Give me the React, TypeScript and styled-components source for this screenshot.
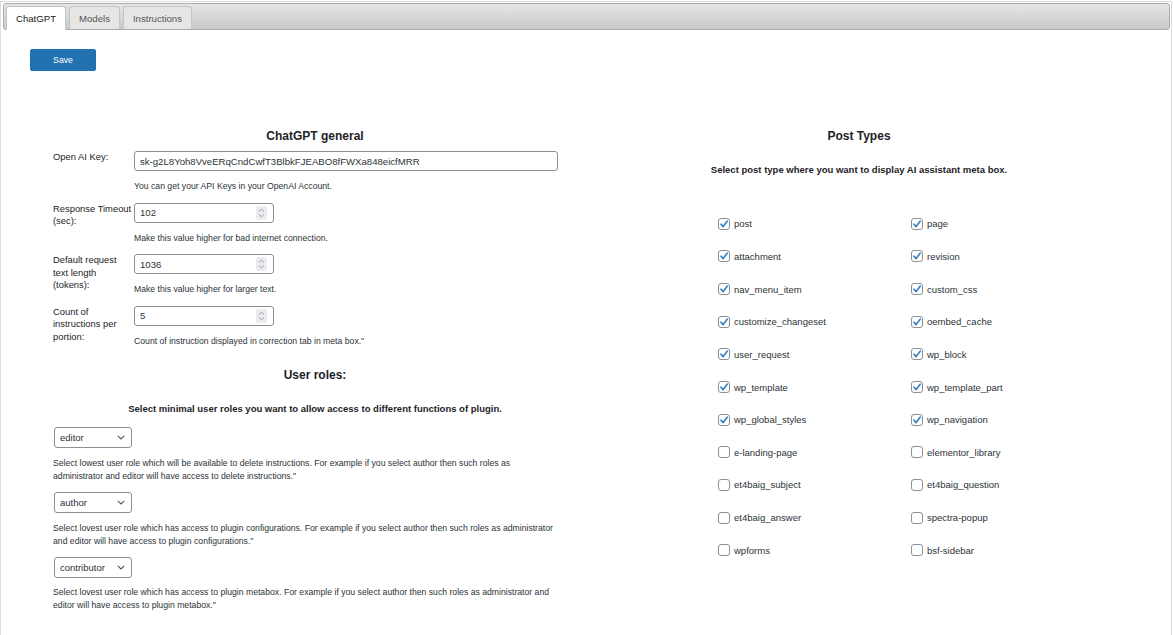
import React from 'react';
import styled, { createGlobalStyle } from 'styled-components';

const Global = createGlobalStyle`
  html, body { margin: 0; padding: 0; background: #fff; }
  body { font-family: "Liberation Sans", Arial, sans-serif; color: #1d2327; }
  * { box-sizing: border-box; }
`;

const Widget = styled.div`
  margin: 1px 1px 0 0;
  border: 1px solid #dcdcdc;
  border-bottom: 0;
  padding: 1px 1px 0 2px;
  min-height: 640px;
  background: #fff;
`;

const TabBar = styled.ul`
  display: flex;
  align-items: flex-end;
  gap: 3px;
  margin: 0;
  padding: 0 2px;
  list-style: none;
  height: 27px;
  border: 1px solid #acacac;
  border-radius: 3px;
  background: linear-gradient(#e6e6e6, #c8c8c8);
`;

const Tab = styled.li<{ $active?: boolean }>`
  height: ${(p) => (p.$active ? '24px' : '23px')};
  margin-bottom: ${(p) => (p.$active ? '-1px' : '0')};
  padding: 0 9px;
  display: flex;
  align-items: center;
  justify-content: center;
  border: 1px solid #c5c5c5;
  border-bottom: 0;
  border-radius: 3px 3px 0 0;
  background: ${(p) => (p.$active ? '#fff' : '#e6e6e6')};
  color: ${(p) => (p.$active ? '#222' : '#555')};
  font-size: 9.6px;
  padding-bottom: ${(p) => (p.$active ? '1px' : '0')};
`;

const Panel = styled.div`
  padding: 19px 27px;
`;

const SaveButton = styled.button`
  width: 66px;
  height: 22px;
  border: 1px solid #2271b1;
  border-radius: 2px;
  background: #2271b1;
  color: #fff;
  font-family: "Liberation Sans", Arial, sans-serif;
  font-size: 8.7px;
  padding: 0;
  display: block;
`;

const Columns = styled.div`
  display: flex;
  gap: 123px;
  margin: 58px 0 0 23px;
`;

const LeftCol = styled.div`
  width: 524px;
  display: flex;
  flex-direction: column;
`;

const RightCol = styled.div`
  width: 318px;
  display: flex;
  flex-direction: column;
`;

const Heading = styled.h2<{ $mt?: number }>`
  margin: ${(p) => p.$mt ?? 0}px 0 0;
  font-size: 12px;
  line-height: 14px;
  font-weight: bold;
  text-align: center;
  color: #1d2327;
`;

const Intro = styled.p<{ $mt?: number }>`
  margin: ${(p) => p.$mt ?? 0}px 0 0;
  font-size: 9.5px;
  line-height: 13px;
  font-weight: bold;
  text-align: center;
  color: #1d2327;
`;

const Form = styled.div`
  display: flex;
  flex-direction: column;
  gap: 9px;
  margin-top: 8px;
  width: 505px;
`;

const Row = styled.div`
  display: grid;
  grid-template-columns: 81px 1fr;
  align-items: start;
`;

const Label = styled.label`
  font-size: 9.4px;
  line-height: 12.5px;
  color: #1d2327;
`;

const FieldCol = styled.div`
  display: flex;
  flex-direction: column;
`;

const Field = styled.div<{ $w: number }>`
  width: ${(p) => p.$w}px;
  height: 20px;
  display: flex;
  align-items: center;
  border: 1px solid #8c8f94;
  border-radius: 3px;
  background: #fff;
  padding: 0 6px 0 5px;
`;

const TextInput = styled.input`
  flex: 1;
  min-width: 0;
  border: 0;
  outline: 0;
  padding: 0;
  background: transparent;
  font-family: "Liberation Sans", Arial, sans-serif;
  font-size: 9.6px;
  color: #2c3338;
`;

const Spinner = styled.span`
  width: 11px;
  height: 14px;
  border-radius: 2px;
  background: #ececf0;
  display: flex;
  align-items: center;
  justify-content: center;
`;

const Desc = styled.p<{ $mt?: number }>`
  margin: ${(p) => p.$mt ?? 9}px 0 0;
  font-size: 8.67px;
  line-height: 13.5px;
  color: #2c3338;
`;

const RoleDesc = styled.p`
  margin: 8.5px 0 0;
  width: 505px;
  font-size: 8.67px;
  line-height: 13px;
  color: #2c3338;
`;

const SelectBox = styled.div<{ $mt: number }>`
  margin: ${(p) => p.$mt}px 0 0 1px;
  width: 78px;
  height: 21px;
  display: flex;
  align-items: center;
  border: 1px solid #8c8f94;
  border-radius: 3px;
  background: #fff;
  padding: 0 6px 0 5px;
`;

const Select = styled.select`
  flex: 1;
  min-width: 0;
  appearance: none;
  border: 0;
  outline: 0;
  padding: 0;
  background: transparent;
  font-family: "Liberation Sans", Arial, sans-serif;
  font-size: 9.5px;
  color: #2c3338;
`;

const CheckGrid = styled.div`
  display: grid;
  grid-template-columns: 193px 193px;
  grid-auto-rows: 32.65px;
  align-items: center;
  margin-top: 32px;
  padding-left: 18px;
`;

const CheckItem = styled.label`
  display: flex;
  align-items: center;
  gap: 4px;
  font-size: 9.5px;
  color: #2c3338;
`;

const Box = styled.span`
  width: 12px;
  height: 12px;
  border: 1px solid #8c8f94;
  border-radius: 3px;
  background: #fff;
  display: flex;
  align-items: center;
  justify-content: center;
`;

const SpinIcon = () => (
  <svg width="7" height="10" viewBox="0 0 7 10" fill="none" stroke="#9a9aa6" strokeWidth="1">
    <path d="M1 3.5 L3.5 1.2 L6 3.5" />
    <path d="M1 6.5 L3.5 8.8 L6 6.5" />
  </svg>
);

const Chevron = () => (
  <svg width="8" height="5" viewBox="0 0 8 5" fill="none" stroke="#50575e" strokeWidth="1.1">
    <path d="M0.8 0.8 L4 4 L7.2 0.8" />
  </svg>
);

const Check = () => (
  <svg width="10" height="10" viewBox="0 0 10 10" fill="none" stroke="#3582c4" strokeWidth="1.7" strokeLinecap="round" strokeLinejoin="round">
    <path d="M2 5.2 L4.1 7.6 L8.2 2.2" />
  </svg>
);

const numberRows = [
  { label: 'Response Timeout (sec):', value: '102', desc: 'Make this value higher for bad internet connection.' },
  { label: 'Default request text length (tokens):', value: '1036', desc: 'Make this value higher for larger text.' },
  { label: 'Count of instructions per portion:', value: '5', desc: 'Count of instruction displayed in correction tab in meta box."' },
];

const roles = [
  {
    value: 'editor',
    mt: 12.5,
    desc: 'Select lowest user role which will be available to delete instructions. For example if you select author then such roles as administrator and editor will have access to delete instructions."',
  },
  {
    value: 'author',
    mt: 9.5,
    desc: 'Select lovest user role which has access to plugin configurations. For example if you select author then such roles as administrator and editor will have access to plugin configurations."',
  },
  {
    value: 'contributor',
    mt: 9,
    desc: 'Select lovest user role which has access to plugin metabox. For example if you select author then such roles as administrator and editor will have access to plugin metabox."',
  },
];

const postTypes: [string, boolean][] = [
  ['post', true], ['page', true],
  ['attachment', true], ['revision', true],
  ['nav_menu_item', true], ['custom_css', true],
  ['customize_changeset', true], ['oembed_cache', true],
  ['user_request', true], ['wp_block', true],
  ['wp_template', true], ['wp_template_part', true],
  ['wp_global_styles', true], ['wp_navigation', true],
  ['e-landing-page', false], ['elementor_library', false],
  ['et4baig_subject', false], ['et4baig_question', false],
  ['et4baig_answer', false], ['spectra-popup', false],
  ['wpforms', false], ['bsf-sidebar', false],
];

export default function App() {
  return (
    <>
      <Global />
      <Widget>
        <TabBar>
          <Tab $active>ChatGPT</Tab>
          <Tab>Models</Tab>
          <Tab>Instructions</Tab>
        </TabBar>
        <Panel>
          <SaveButton>Save</SaveButton>
          <Columns>
            <LeftCol>
              <Heading>ChatGPT general</Heading>
              <Form>
                <Row>
                  <Label>Open AI Key:</Label>
                  <FieldCol>
                    <Field $w={424}>
                      <TextInput defaultValue="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" />
                    </Field>
                    <Desc>You can get your API Keys in your OpenAI Account.</Desc>
                  </FieldCol>
                </Row>
                {numberRows.map((r) => (
                  <Row key={r.label}>
                    <Label>{r.label}</Label>
                    <FieldCol>
                      <Field $w={140}>
                        <TextInput defaultValue={r.value} />
                        <Spinner>
                          <SpinIcon />
                        </Spinner>
                      </Field>
                      <Desc>{r.desc}</Desc>
                    </FieldCol>
                  </Row>
                ))}
              </Form>
              <Heading $mt={20}>User roles:</Heading>
              <Intro $mt={19.5}>Select minimal user roles you want to allow access to different functions of plugin.</Intro>
              {roles.map((r) => (
                <React.Fragment key={r.value}>
                  <SelectBox $mt={r.mt}>
                    <Select defaultValue={r.value}>
                      <option value={r.value}>{r.value}</option>
                    </Select>
                    <Chevron />
                  </SelectBox>
                  <RoleDesc>{r.desc}</RoleDesc>
                </React.Fragment>
              ))}
            </LeftCol>
            <RightCol>
              <Heading>Post Types</Heading>
              <Intro $mt={19.5}>Select post type where you want to display AI assistant meta box.</Intro>
              <CheckGrid>
                {postTypes.map(([name, on]) => (
                  <CheckItem key={name}>
                    <Box>{on && <Check />}</Box>
                    {name}
                  </CheckItem>
                ))}
              </CheckGrid>
            </RightCol>
          </Columns>
        </Panel>
      </Widget>
    </>
  );
}
